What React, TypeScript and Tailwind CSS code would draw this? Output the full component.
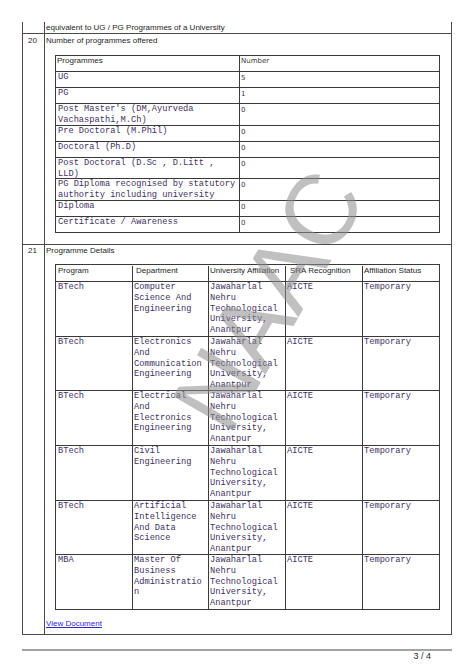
import React from "react";

const SANS = "font-['Liberation_Sans',Arial,sans-serif]";
const MONO = "font-['Liberation_Mono','Courier_New',monospace] text-[8.7px] leading-[10.8px] text-[#3f3163]";
const TAHO = "font-['DejaVu_Sans',Verdana,sans-serif] text-[7px] leading-[10px]";

const progRows: { name: string[]; num: string; h: string }[] = [
  { name: ["UG"], num: "5", h: "h-[16px]" },
  { name: ["PG"], num: "1", h: "h-[16px]" },
  { name: ["Post Master's (DM,Ayurveda", "Vachaspathi,M.Ch)"], num: "0", h: "h-[22px]" },
  { name: ["Pre Doctoral (M.Phil)"], num: "0", h: "h-[16px]" },
  { name: ["Doctoral (Ph.D)"], num: "0", h: "h-[16px]" },
  { name: ["Post Doctoral (D.Sc , D.Litt ,", "LLD)"], num: "0", h: "h-[21px]" },
  { name: ["PG Diploma recognised by statutory", "authority including university"], num: "0", h: "h-[22px]" },
  { name: ["Diploma"], num: "0", h: "h-[16px]" },
  { name: ["Certificate / Awareness"], num: "0", h: "h-[16px]" },
];

const univ = ["Jawaharlal", "Nehru", "Technological", "University,", "Anantpur"];

const detailRows: { prog: string; dept: string[]; h: string }[] = [
  { prog: "BTech", dept: ["Computer", "Science And", "Engineering"], h: "h-[55px]" },
  { prog: "BTech", dept: ["Electronics", "And", "Communication", "Engineering"], h: "h-[54px]" },
  { prog: "BTech", dept: ["Electrical", "And", "Electronics", "Engineering"], h: "h-[55px]" },
  { prog: "BTech", dept: ["Civil", "Engineering"], h: "h-[55px]" },
  { prog: "BTech", dept: ["Artificial", "Intelligence", "And Data", "Science"], h: "h-[54px]" },
  { prog: "MBA", dept: ["Master Of", "Business", "Administratio", "n"], h: "h-[55px]" },
];

function Lines({ lines }: { lines: string[] }) {
  return (
    <>
      {lines.map((l, i) => (
        <div key={i} className="whitespace-pre">
          {l}
        </div>
      ))}
    </>
  );
}

export default function App() {
  return (
    <div className={`relative w-[474px] h-[669px] overflow-hidden bg-white ${SANS}`}>
      <div className="pt-[22px] pl-[22px]">
        <div className="w-[430px] border-x border-b border-[#4b4b4b] text-[8px] leading-[10px] text-[#1e1e1e]">
          {/* row continuing from previous page */}
          <div className="flex h-[12px] border-b border-[#4b4b4b]">
            <div className="w-[22px] border-r border-[#4b4b4b]" />
            <div className="pl-px pt-px leading-[10px]">equivalent to UG / PG Programmes of a University</div>
          </div>

          {/* row 20 */}
          <div className="flex border-b border-[#4b4b4b]">
            <div className="w-[22px] shrink-0 border-r border-[#4b4b4b] pl-[5px] pt-[2px]">20</div>
            <div className="pl-px pt-[2px] pb-[11px]">
              <div>Number of programmes offered</div>
              <div className="ml-[9px] mt-[9px] w-[385px] border-x border-t border-[#3a3a3a]">
                <div className="flex h-[16px] border-b border-[#3a3a3a]">
                  <div className="w-[184px] shrink-0 border-r border-[#3a3a3a] pl-px">Programmes</div>
                  <div className={`pl-px ${TAHO} text-[#3a3a3a]`}>Number</div>
                </div>
                {progRows.map((r, i) => (
                  <div key={i} className={`flex ${r.h} border-b border-[#3a3a3a]`}>
                    <div className={`w-[184px] shrink-0 border-r border-[#3a3a3a] pl-[2px] ${MONO}`}>
                      <Lines lines={r.name} />
                    </div>
                    <div className={`pl-px pt-px ${TAHO} text-[#3f3163]`}>{r.num}</div>
                  </div>
                ))}
              </div>
            </div>
          </div>

          {/* row 21 */}
          <div className="flex">
            <div className="w-[22px] shrink-0 border-r border-[#4b4b4b] pl-[5px] pt-px">21</div>
            <div className="pl-px pt-px pb-[5px]">
              <div>Programme Details</div>
              <div className="ml-[9px] mt-[8px] w-[385px] border-x border-t border-[#3a3a3a]">
                <div className="flex h-[17px] border-b border-[#3a3a3a] pt-px">
                  <div className="w-[77px] shrink-0 border-r border-[#3a3a3a] pl-[2px]">Program</div>
                  <div className="w-[76px] shrink-0 border-r border-[#3a3a3a] pl-[3px]">Department</div>
                  <div className="w-[77px] shrink-0 border-r border-[#3a3a3a] pl-px whitespace-nowrap">University Affiliation</div>
                  <div className="w-[77px] shrink-0 border-r border-[#3a3a3a] pl-[4px]">SRA Recognition</div>
                  <div className="pl-px">Affiliation Status</div>
                </div>
                {detailRows.map((r, i) => (
                  <div key={i} className={`flex ${r.h} border-b border-[#3a3a3a] ${MONO}`}>
                    <div className="w-[77px] shrink-0 border-r border-[#3a3a3a] pl-[2px]">{r.prog}</div>
                    <div className="w-[76px] shrink-0 border-r border-[#3a3a3a] pl-px">
                      <Lines lines={r.dept} />
                    </div>
                    <div className="w-[77px] shrink-0 border-r border-[#3a3a3a] pl-px">
                      <Lines lines={univ} />
                    </div>
                    <div className="w-[77px] shrink-0 border-r border-[#3a3a3a] pl-px">AICTE</div>
                    <div className="pl-px">Temporary</div>
                  </div>
                ))}
              </div>
              <div className="mt-[9px]">
                <a href="#" className="text-[#2b2bd6] underline">
                  View Document
                </a>
              </div>
            </div>
          </div>
        </div>

        {/* footer */}
        <div className="mt-[14px] w-[430px] h-[2px] bg-[#a3a3a3]" />
        <div className="w-[430px] pr-[21px] text-right text-[9px] leading-[10px] text-[#2a2a2a]">3 / 4</div>
      </div>

      {/* NAAC watermark */}
      <div
        className="pointer-events-none absolute left-[268px] top-[300px] -translate-x-1/2 -translate-y-1/2 -rotate-[60deg] text-[100px] leading-none whitespace-nowrap text-[rgba(140,140,140,0.55)] font-['Liberation_Sans',Arial,sans-serif]"
      >
        NAAC
      </div>
    </div>
  );
}
